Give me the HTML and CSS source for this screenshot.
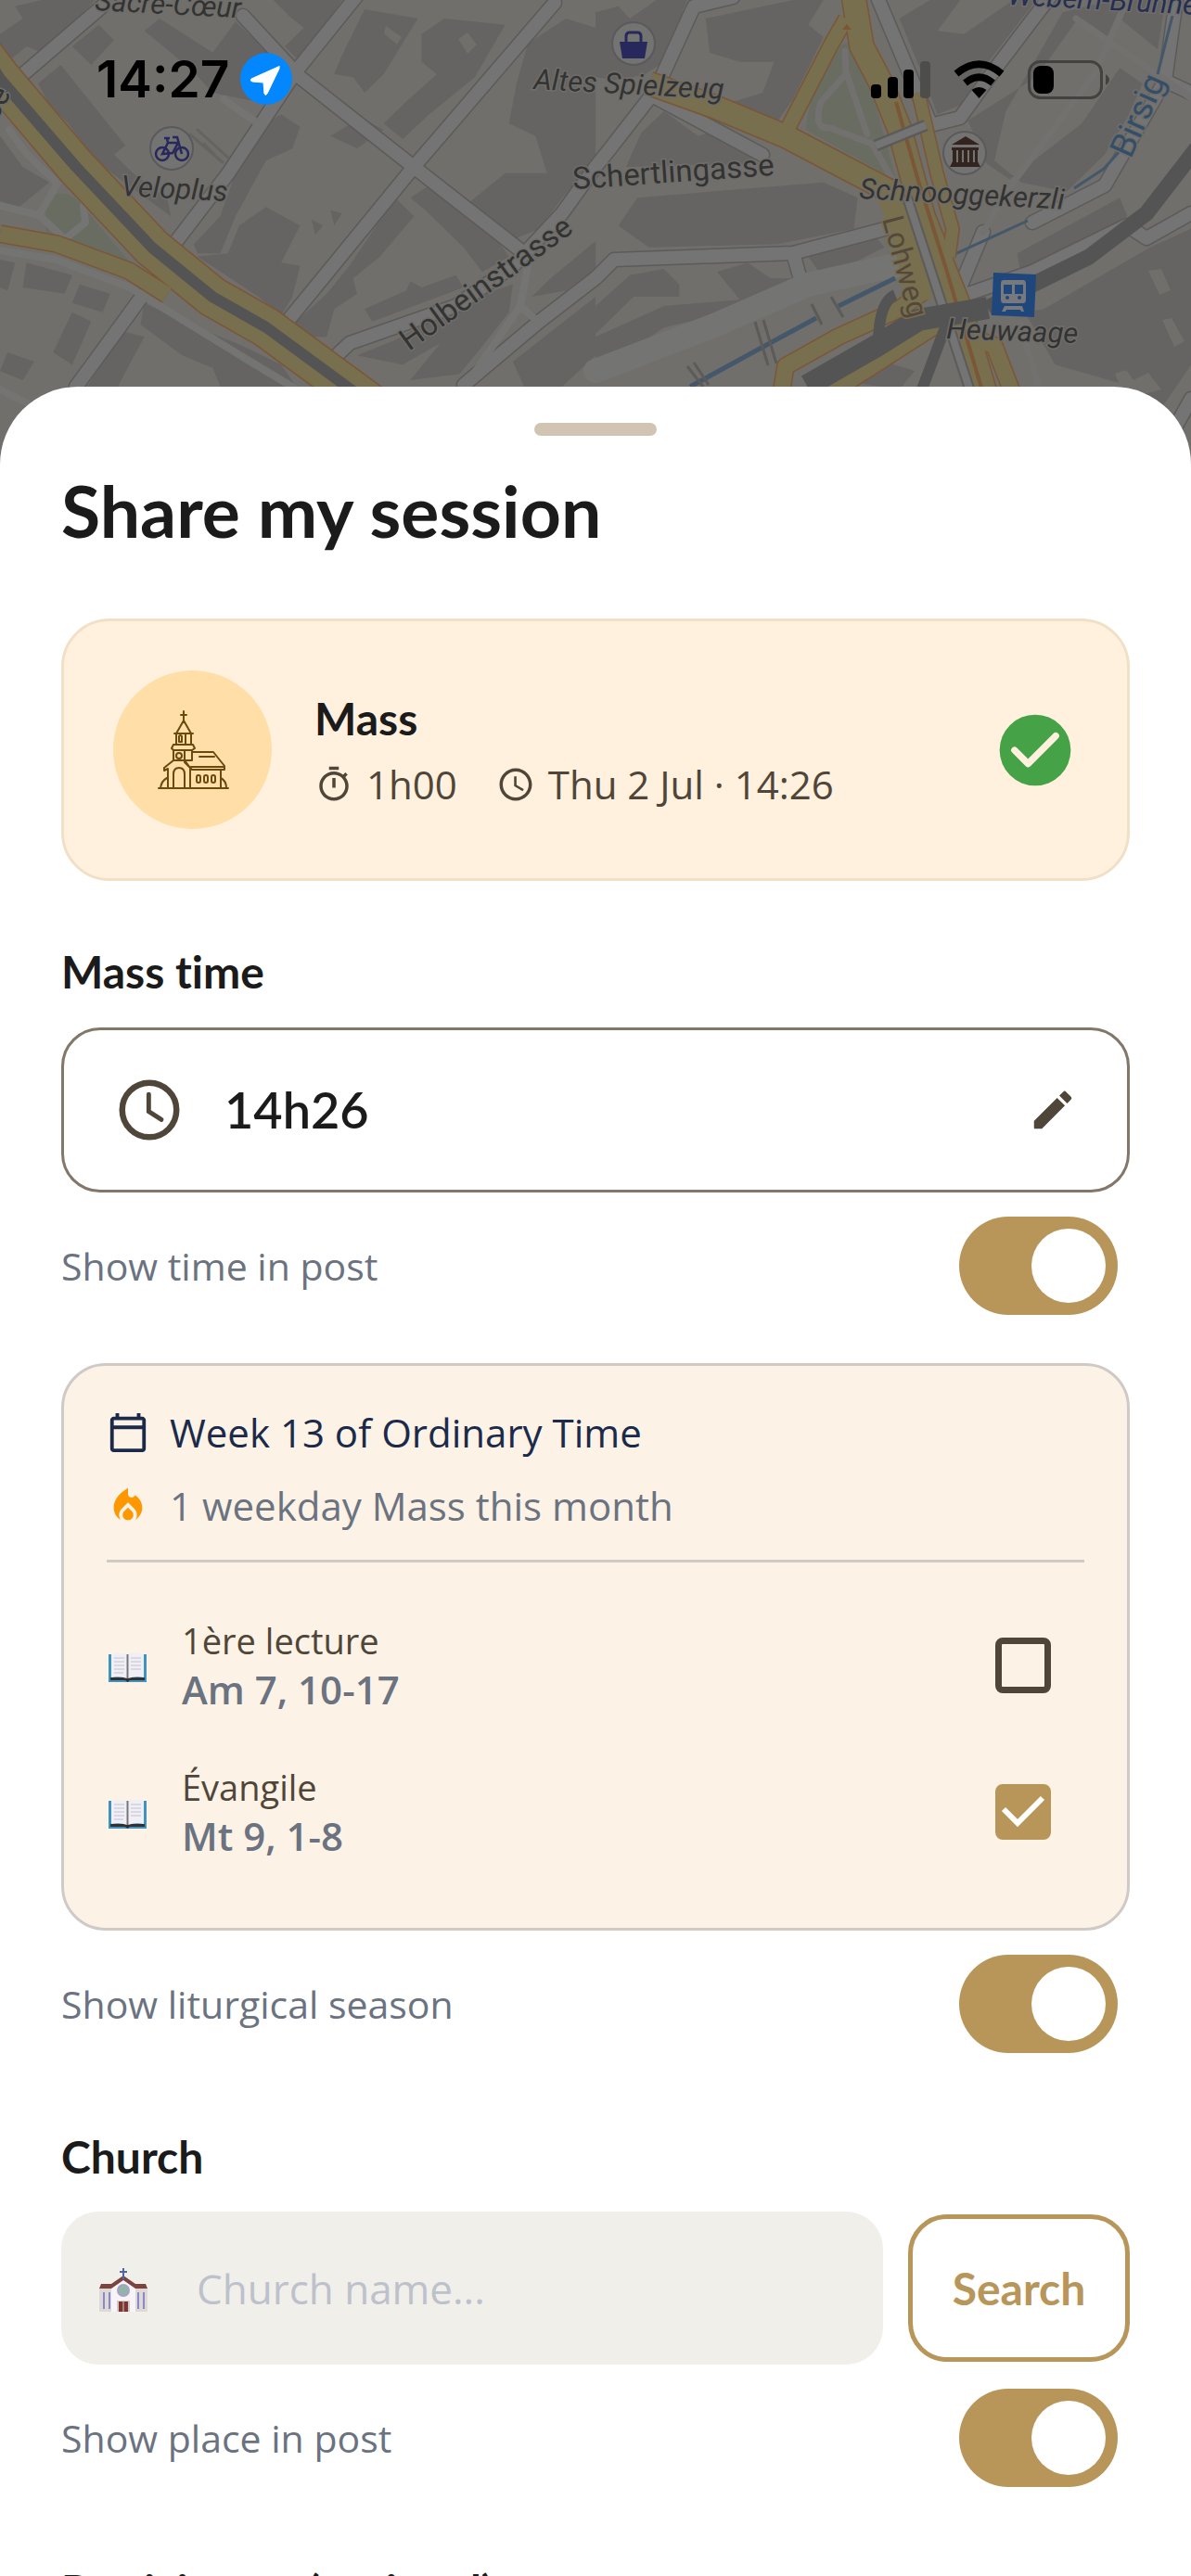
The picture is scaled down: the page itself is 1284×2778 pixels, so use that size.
FILE: index.html
```html
<!DOCTYPE html>
<html lang="en">
<head>
<meta charset="utf-8">
<meta name="viewport" content="width=device-width, initial-scale=1">
<title>Share my session</title>
<link rel="stylesheet" href="styles.css">
</head>
<body>
<div class="screen">
  <svg class="map" viewBox="0 0 1284 520" preserveAspectRatio="xMidYMin slice" aria-hidden="true">
    <defs>
      <path id="streets" d="M385-5L319 77L246 187L188 263M598 3L446 180L307 350M262 17L323 83L446 180L565 273M110 7L25 80M356 390L377 370L491 330L553 287L606 230L642 180L658 160L707 97L748 7L790-3M642 300L581 347L500 415M642 300L662 280L855 273L961 245M155 317L82 417M945-5L985 90L1003 133M1133-5L1076 70L1035 127L1003 135M703 103L822 167M1268 0L1256 87L1290 103M1256 87L1191 200L1113 240M1035 320L1113 293L1215 243L1236 257L1284 230M1060 250L1035 310M855 273L866 312M1284 430L1262 470"/>
      <g id="book"><path d="M2 3H43V33H2Z" fill="#3f93bd"/><path d="M4 28H41V31H25L22.500 33L20 31H4Z" fill="#34302f"/><path d="M5 3Q14 0 22 3V29Q14 26 5 28ZM40 3Q31 0 23 3V29Q31 26 40 28Z" fill="#f0eff5"/><path d="M8 7H19M8 11H19M8 15H19M8 19H19M8 23H18M26 7H37M26 11H37M26 15H37M26 19H37" stroke="#c3c0d0"/><path d="M22.500 3V29" stroke="#77747c" stroke-width="2"/></g>
    </defs>
    <rect width="1284" height="520" fill="#706f6b"/>
    <!-- Building blocks -->
    <g fill="#656462" transform="scale(.4095 .3333)">
      <path d="M40 20L110 0H250L180 90L110 170L70 150L20 200L0 180V110L60 60ZM190 150L260 80L300 130L240 210ZM100 270L160 210L330 470L300 500L350 560L440 640L450 700L250 520L180 400L130 340ZM380 100L420 60L560 170L620 70L690 150L740 240L680 330L560 300L500 220L480 200ZM720 0H900L850 100L790 200L750 150L800 90L760 50ZM960 30L1100 60L1010 240L960 300L930 250L880 240L900 180ZM1110 110L1170 60L1330 80L1250 250L1130 370L1060 450L1010 400L1060 340L1150 240L1110 200ZM700 400L740 370L790 410L770 480L700 520L620 700L580 820L520 820L510 790L580 700L620 560ZM700 670L790 730L740 850L790 860L770 960L740 1020L680 960L520 830L600 820L630 730ZM1130 600L1180 630L1300 760L1340 830L1270 880L1220 800L1120 680L1080 640ZM1040 640L1090 700L1000 830L930 900L940 950L880 1000L860 1090L780 1090L780 1040L860 950L920 860ZM960 1000L1070 940L1080 910L1110 930L1200 890L1220 930L980 1040ZM1390 140L1490 60L1568 90V520L1480 640L1420 740L1360 770L1230 660L1330 560L1440 560L1410 440L1340 400L1360 270Z"/>
      <path d="M0 440L60 540L130 590L50 670L0 650ZM0 840L40 850L20 940L0 930ZM70 850L190 890L170 950L60 930ZM210 920L290 950L270 1010L190 980ZM190 1010L240 1040L190 1180L140 1140ZM20 1140L90 1170L60 1230L0 1200ZM380 980L500 1050L640 1120L740 1180L780 1250H580L560 1190L480 1150L370 1050ZM320 1070L380 1090L310 1250H230ZM940 1150L1040 1100L1130 1040L1250 960L1350 920L1340 1010L1270 1120L1210 1210L1080 1230L1160 1110L1060 1180ZM1400 960L1490 940L1568 870V780L1450 900ZM1350 1170L1568 960V1150L1480 1250H1380ZM870 440L950 380L1010 420L940 480ZM820 710L850 730L830 760ZM870 680L900 690L880 730Z"/>
      <g transform="translate(1568 0)">
        <path d="M0 40L60 20L90 60L160 0H240L180 200L130 240L60 260L0 250ZM290 60L520 0H600L560 80L600 120L520 320L480 390L360 330L440 300L470 200L380 200L300 170ZM800 60L880 0H960L900 100L970 110L1100 0H1160L1040 190L960 340L900 370L860 240ZM1230 40L1360 0H1500L1480 160L1380 60L1340 130L1270 60L1160 250L980 390L1030 530L1090 580L1280 400L1380 220L1440 270L1400 380L1340 500L1240 620L1120 590L1050 520L1080 360ZM120 430L180 360L270 440L320 420L430 530L80 540ZM110 640L500 600L600 590L690 640L680 740L480 790L140 800L60 730ZM560 830L740 770L760 800L600 900ZM180 870L220 920L220 960L100 960L0 1080V990L90 890ZM320 880L400 850L460 900L520 900L560 920L420 990L180 1060L20 1190L0 1160V1090L180 990L380 970ZM1110 820L1380 640L1400 700L1150 860L1120 890ZM1180 1000L1460 800L1568 740V1180L1490 1320L1440 1310L1380 1240L1210 1180L1130 1010ZM640 1230L760 1170L840 1200L800 1260Z"/>
      </g>
    </g>
    <path d="M1238 292L1252 290L1262 313L1250 318ZM1253 345L1263 343L1277 368L1266 374ZM1202 403L1214 399L1222 410L1238 402L1252 420L1230 426L1208 418ZM494 42L504 35L514 48L504 58ZM416 28L433 40L428 48L414 36Z" fill="#706f6b"/>
    <!-- Parks -->
    <g fill="#686c61">
      <path d="M56 210Q76 205 89 222L139 282L120 278L95 265L50 250Q46 225 56 210Z"/>
      <path d="M908 48L925 45L965 190L955 188L869 140Q872 110 880 90Z"/>
    </g>
    <!-- Side streets -->
    <g fill="none" stroke-linejoin="round" stroke-linecap="round">
      <use href="#streets" stroke="#5c5b59" stroke-width="17"/>
      <use href="#streets" stroke="#747474" stroke-width="14"/>
      <path d="M642 400L765 353L871 307L970 285" stroke="#747472" stroke-width="26"/>
      <path d="M569 287L561 330L508 407M561 330L580 347M241 107L278 133M0 222L42 232L62 198L28 165L10 140M42 232L70 258L92 240L90 222M0 270L60 280L140 310L270 390L320 420M0 420L80 460" stroke="#747472" stroke-width="8"/>
      <path d="M1160 20L1290 110M1215 0L1180 80L1090 200L1060 250M911 55L912 80L885 110Q876 140 895 138L940 155L960 190M913 80L935 145M1100 350L1120 417" stroke="#72716f" stroke-width="7"/>
      <path d="M205 145L240 175M213 140L246 170M220 155L236 172" stroke="#656462" stroke-width="3"/>
    </g>
    <!-- Stream -->
    <path d="M1264 17L1248 80M1207 163L1190 182L1158 203M1108 238L1023 277" fill="none" stroke="#44576b" stroke-width="3"/>
    <path d="M965 300L904 330M880 343L830 370L744 417" fill="none" stroke="#44576b" stroke-width="5"/>
    <path d="M896 320L909 342M875 328L886 350M814 347L828 394M823 345L837 392M741 395L758 417M748 391L764 415" fill="none" stroke="#5c5b59" stroke-width="3"/>
    <!-- Main roads -->
    <g fill="none" stroke-linejoin="round">
      <g stroke="#7b5637">
        <path d="M-20 57L0 83L82 180L164 267L229 320L287 353L400 436" stroke-width="45"/>
        <path d="M0 252L61 263L139 292L180 318" stroke-width="20"/>
        <path d="M920-5L929 50L950 90L970 140L995 233L1035 333L1064 430" stroke-width="28"/>
        <path d="M912 20L895 50L847 143" stroke-width="18"/>
        <path d="M700 90L770 115L847 147L961 207" stroke-width="27"/>
        <path d="M990 100L1010 187L1027 247L1023 277" stroke-width="16"/>
        <path d="M842 425L847 395L904 363L970 333L995 315M896 423L1010 350L1072 373L1092 425" stroke-width="20"/>
      </g>
      <g stroke="#776f4d">
        <path d="M-20 57L0 83L82 180L164 267L229 320L287 353L400 436" stroke-width="42"/>
        <path d="M0 252L61 263L139 292L180 318" stroke-width="17"/>
        <path d="M920-5L929 50L950 90L970 140L995 233L1035 333L1064 430" stroke-width="25"/>
        <path d="M912 20L895 50L847 143" stroke-width="15"/>
        <path d="M700 90L770 115L847 147L961 207" stroke-width="24"/>
        <path d="M955 200L975 250L992 325" stroke-width="28"/>
        <path d="M990 100L1010 187L1027 247L1023 277" stroke-width="13"/>
        <path d="M842 425L847 395L904 363L970 333L995 315M896 423L1010 350L1072 373L1092 425" stroke-width="17"/>
      </g>
      <path d="M966 110L990 195L1020 290L1060 425" stroke="#7b5637" stroke-width="4"/>
      <path d="M978 213L1047 425" stroke="#5c5b59" stroke-width="12"/>
      <path d="M978 213L1047 425" stroke="#747474" stroke-width="8"/>
      <path d="M944 157L998 135" stroke="#5c5b59" stroke-width="13"/>
      <path d="M944 157L998 135" stroke="#747474" stroke-width="8"/>
      <path d="M908 32L913 26L918 32Z" fill="#7b5637"/>
    </g>
    <!-- Tram lines -->
    <g fill="none" stroke="#545454" stroke-linejoin="round">
      <path d="M-20 53L0 85L82 180L164 267L229 320L287 353L400 436" stroke-width="12"/>
      <path d="M1290 160L1236 230L1174 277L1113 307L1065 332" stroke-width="17"/>
      <path d="M1065 332L990 345L945 373L870 416" stroke-width="24"/>
      <path d="M965 318Q948 325 947 368M1022 345L992 425" stroke-width="12"/>
    </g>
    <!-- Places -->
    <g fill="#737371" stroke="#5a5a5e" stroke-width="2">
      <circle cx="185" cy="160" r="23"/><circle cx="683" cy="47" r="23"/><circle cx="1040" cy="165" r="23"/>
    </g>
    <g fill="none" stroke="#28285c" stroke-width="2.5">
      <circle cx="175" cy="166" r="7"/><circle cx="196" cy="166" r="7"/>
      <path d="M175 166L181 154H192L186 165ZM177 149H183M181 154L180 149M196 166L191 148H186"/>
    </g>
    <path d="M668 45H698L695 63H671Z" fill="#28285c"/>
    <path d="M675 46V39Q675 35 679 35H687Q691 35 691 39V46" fill="none" stroke="#28285c" stroke-width="3"/>
    <path d="M1026 156L1041 147L1056 156ZM1026 159H1055V162H1054V174L1057 180H1024L1027 174V162H1026ZM1031 162V175H1033V162ZM1037 162V175H1039V162ZM1043 162V175H1045V162ZM1049 162V175H1051V162Z" fill="#33241f" fill-rule="evenodd"/>
    <path d="M1071 294L1117 296L1115 342L1069 340Z" fill="#20477c"/>
    <path d="M1082 302H1103Q1106 302 1106 306V323Q1106 327 1103 327H1082Q1079 327 1079 323V306Q1079 302 1082 302ZM1082 307V317H1091V307ZM1094 307V317H1103V307ZM1084 321A2 2 0 1 0 1088 321A2 2 0 1 0 1084 321ZM1097 321A2 2 0 1 0 1101 321A2 2 0 1 0 1097 321ZM1083 330H1102L1104 336H1101L1100 334H1085L1084 336H1080Z" fill="#77797c" fill-rule="evenodd"/>
    <g class="map-names">
      <text x="102" y="11" transform="rotate(3 102 11)">Sacré-Cœur</text>
      <text x="130" y="211" transform="rotate(3 130 211)">Veloplus</text>
      <text x="575" y="96" transform="rotate(3 575 96)">Altes Spielzeug</text>
      <text x="926" y="214" transform="rotate(3 926 214)">Schnooggekerzli</text>
      <text x="1020" y="365" transform="rotate(2 1020 365)">Heuwaage</text>
      <text class="quarter" x="1086" y="5" transform="rotate(3 1086 5)">Webern-Brunnen</text>
      <text class="water" x="1219" y="172" transform="rotate(-66 1219 172)">Birsig</text>
      <text class="street" x="618" y="204" transform="rotate(-4 618 204)">Schertlingasse</text>
      <text class="street" x="441" y="379" transform="rotate(-36 441 379)">Holbeinstrasse</text>
      <text class="street" x="-12" y="146" transform="rotate(-62 -12 146)">sse</text>
      <text class="road" x="951" y="236" transform="rotate(75 951 236)">Lohweg</text>
    </g>
  </svg>

  <header class="status-bar">
    <div class="status-left">
      <time class="status-time">14:27</time>
      <svg width="57" height="57" viewBox="0 0 57 57" role="img" aria-label="Location in use"><circle cx="28" cy="28" r="28" fill="#0387fe"/><path d="M42 15Q43 14 41 15L12 28Q10 30 13 31L25 32L26 44Q27 47 29 44L42 17Z" fill="#fff" stroke="#fff" stroke-width="1"/></svg>
    </div>
    <div class="status-right">
      <svg width="64" height="42" viewBox="0 0 64 42" role="img" aria-label="Signal"><rect x="0" y="26" width="11" height="15" rx="4"/><rect x="18" y="18" width="11" height="23" rx="4"/><rect x="35" y="10" width="11" height="31" rx="4"/><rect x="53" y="1" width="11" height="40" rx="4" fill="#4d4d4c"/></svg>
      <svg width="55" height="42" viewBox="0 0 55 42" role="img" aria-label="Wi-Fi"><path d="M27.500 41L19.500 32Q27.500 26 35.500 32Z"/><path d="M12.500 24.500Q27.500 12 42.500 24.500M3 14.500Q27.500-6 52 14.500" fill="none" stroke="#000" stroke-width="7.500"/></svg>
      <svg width="89" height="42" viewBox="0 0 89 42" role="img" aria-label="Battery"><rect x="1.500" y="1.500" width="78" height="39" rx="12" fill="none" stroke="#424241" stroke-width="3"/><rect x="6" y="6" width="22" height="30" rx="8"/><path d="M84 15Q92 21 84 27Z" fill="#424241"/></svg>
    </div>
  </header>

  <main class="sheet">
    <div class="handle"></div>
    <h1 class="title">Share my session</h1>

    <section class="session">
      <div class="session-mark">
        <svg width="78" height="86" viewBox="0 0 78 86" fill="none" stroke="#6b4a0d" stroke-width="2" stroke-linejoin="round" stroke-linecap="round" aria-hidden="true">
          <path d="M29 1V11M26 5H32M29 11L21 25H37L29 11M19 25H39M21 25V36M37 25V36M31 25V36M24 28Q26 26 27 28V34H24ZM18 37H39L41 41L38 43H18L16 41ZM18 43V54M30 43V55M38 43V54H30"/>
          <circle cx="24" cy="49" r="3"/>
          <path d="M18 54L8 62V65L12 63V84M30 54L36 62V84M18 54H30M18 84V69Q18 62 24 62Q30 62 30 69V84M38 45H61L73 60V64H38L30 56M37 61H72M46 50H62M69 64V84M2 84H77M4 84Q5 76 11 73M75 84Q75 76 69 73"/>
          <rect x="43" y="70" width="4" height="8" rx="2"/><rect x="51" y="70" width="4" height="8" rx="2"/><rect x="59" y="70" width="4" height="8" rx="2"/>
        </svg>
      </div>
      <div class="session-info">
        <h2 class="label">Mass</h2>
        <div class="meta">
          <span class="meta-item">
            <svg width="42" height="42" viewBox="0 0 24 24" fill="currentColor" aria-hidden="true"><path d="M15 1H9v2h6V1zm-4 13h2V8h-2v6zm8.030-6.610l1.420-1.420c-.43-.51-.9-.99-1.410-1.410l-1.420 1.420C16.070 4.740 14.120 4 12 4c-4.970 0-9 4.030-9 9s4.020 9 9 9 9-4.030 9-9c0-2.120-.74-4.070-1.970-5.610zM12 20c-3.870 0-7-3.130-7-7s3.130-7 7-7 7 3.130 7 7-3.130 7-7 7z"/></svg>
            <span>1h00</span>
          </span>
          <span class="meta-item">
            <svg width="42" height="42" viewBox="0 0 24 24" fill="currentColor" aria-hidden="true"><path d="M11.990 2C6.470 2 2 6.480 2 12s4.470 10 9.990 10C17.520 22 22 17.520 22 12S17.520 2 11.990 2zM12 20c-4.420 0-8-3.580-8-8s3.580-8 8-8 8 3.580 8 8-3.580 8-8 8zm.5-13H11v6l5.250 3.150.75-1.230-4.500-2.670z"/></svg>
            <span>Thu 2 Jul · 14:26</span>
          </span>
        </div>
      </div>
      <svg width="92" height="92" viewBox="0 0 24 24" role="img" aria-label="Completed"><circle cx="12" cy="12" r="10" fill="#45a247"/><path d="M6.200 12L10 15.800L17.800 8" fill="none" stroke="#fff1de" stroke-width="1.900" stroke-linecap="round" stroke-linejoin="round"/></svg>
    </section>

    <section class="group">
      <label class="label" for="mass-time">Mass time</label>
      <div class="time-field">
        <svg width="78" height="78" viewBox="0 0 24 24" fill="none" stroke="currentColor" stroke-width="2" aria-hidden="true"><circle cx="12" cy="12" r="9"/><path d="M11.800 6.800V12.500L16 15.200" stroke-width="1.500" stroke-linecap="round"/></svg>
        <input class="time-input" id="mass-time" type="text" value="14h26">
        <svg width="54" height="54" viewBox="0 0 24 24" fill="currentColor" aria-hidden="true"><path d="M3 17.460v3.040c0 .28.22.5.5.5h3.040c.13 0 .26-.05.35-.15L17.810 9.940l-3.750-3.750L3.150 17.100c-.1.1-.15.22-.15.36zM20.710 7.040a1 1 0 0 0 0-1.410l-2.340-2.340a1 1 0 0 0-1.410 0l-1.830 1.830 3.750 3.750 1.830-1.830z"/></svg>
      </div>
      <div class="switch-row">
        <label for="show-time">Show time in post</label>
        <input class="switch" id="show-time" type="checkbox" role="switch" checked>
      </div>
    </section>

    <section class="season">
      <div class="season-line week">
        <svg width="46" height="46" viewBox="0 0 24 24" fill="currentColor" aria-hidden="true"><path d="M20 3h-1V1h-2v2H7V1H5v2H4c-1.100 0-2 .9-2 2v16c0 1.100.9 2 2 2h16c1.100 0 2-.9 2-2V5c0-1.100-.9-2-2-2zm0 18H4V10h16v11zm0-13H4V5h16v3z"/></svg>
        <span>Week 13 of Ordinary Time</span>
      </div>
      <div class="season-line">
        <svg width="46" height="46" viewBox="0 0 24 24" fill="#ff9800" aria-hidden="true"><path d="M12 12.900l-2.130 2.090C9.310 15.550 9 16.280 9 17.060 9 18.680 10.350 20 12 20s3-1.320 3-2.940c0-.78-.31-1.520-.87-2.070L12 12.900z"/><path d="M16 6l-.44.55C14.380 8.020 12 7.190 12 5.300V2S4 6 4 13c0 2.920 1.560 5.470 3.890 6.860C7.330 19.070 7 18.100 7 17.060c0-1.320.52-2.560 1.470-3.500L12 10.100l3.530 3.470c.95.93 1.470 2.170 1.470 3.500 0 1.020-.31 1.960-.85 2.750 1.890-1.150 3.290-3.060 3.710-5.300C20.520 10.970 18.790 7.620 16 6z"/></svg>
        <span>1 weekday Mass this month</span>
      </div>
      <ul class="readings">
        <li class="reading">
          <svg width="46" height="38" viewBox="0 -4 46 38" aria-hidden="true"><use href="#book"/></svg>
          <label class="reading-text" for="reading-1"><span class="reading-name">1ère lecture</span><span class="reading-ref">Am 7, 10-17</span></label>
          <input class="tick" id="reading-1" type="checkbox">
        </li>
        <li class="reading">
          <svg width="46" height="38" viewBox="0 -4 46 38" aria-hidden="true"><use href="#book"/></svg>
          <label class="reading-text" for="reading-2"><span class="reading-name">Évangile</span><span class="reading-ref">Mt 9, 1-8</span></label>
          <span class="tick-wrap"><input class="tick" id="reading-2" type="checkbox" checked><svg class="tick-mark" width="60" height="60" viewBox="0 0 60 60" fill="none" stroke="#fff" stroke-width="6" aria-hidden="true"><path d="M9 27L24 42L51 15"/></svg></span>
        </li>
      </ul>
    </section>
    <div class="switch-row">
      <label for="show-season">Show liturgical season</label>
      <input class="switch" id="show-season" type="checkbox" role="switch" checked>
    </div>

    <section class="group church">
      <label class="label" for="church-name">Church</label>
      <div class="search-row">
        <div class="church-field">
          <svg width="54" height="54" viewBox="0 -4 54 54" aria-hidden="true"><path d="M1 22H53V48H1Z" fill="#dfd9d6"/><path d="M14 22L27 12L40 22V48H14Z" fill="#f6f4f6"/><path d="M3 18H14L27 9L40 18H51L53 23H40L27 14L14 23H1Z" fill="#7c4340"/><path d="M27 1V13M23 5H31" stroke="#5263a8" stroke-width="2"/><circle cx="27" cy="25" r="6" fill="#92b5a9" stroke="#aaa0c4" stroke-width="2"/><path d="M20 36H34V48H20Z" fill="#d6cac6"/><path d="M22 37H26.500V48H22ZM27.500 37H32V48H27.500Z" fill="#7d3432"/><path d="M6 27V45M12 27V45M43 27V45M49 27V45" stroke="#8988ce" stroke-width="2"/></svg>
          <input class="church-input" id="church-name" type="text" placeholder="Church name...">
        </div>
        <button class="search-button" type="button">Search</button>
      </div>
      <div class="switch-row">
        <label for="show-place">Show place in post</label>
        <input class="switch" id="show-place" type="checkbox" role="switch" checked>
      </div>
    </section>

    <section class="group participants">
      <h2 class="label">Participants (optional)</h2>
    </section>
  </main>
</div>
</body>
</html>
```
FILE: styles.css
```css
:root {
  --gold: #b89659;
  --ink: #1b1b1b;
  --brown: #4f4639;
  --slate: #6b7280;
  --body: "Open Sans", "Noto Sans", sans-serif;
  --strong: Lato, "Open Sans", sans-serif;
}

* { box-sizing: border-box; }

body {
  margin: 0;
  background: #fff;
  color: var(--ink);
  font: 42px/54px var(--body);
}

svg { display: block; flex: none; }
h1, h2 { margin: 0; }
input, button { font: inherit; color: inherit; margin: 0; }

.screen {
  position: relative;
  display: flex;
  flex-direction: column;
  height: 100vh;
  overflow: hidden;
}

/* Dimmed map behind the sheet */
.map {
  position: absolute;
  top: 0;
  left: 0;
  width: 100%;
  height: 520px;
}

.map-names {
  font: italic 31px Roboto, sans-serif;
  fill: #333332;
  stroke: #6f6e6b;
  stroke-width: 3px;
  paint-order: stroke;
}
.map-names .street { font-style: normal; font-size: 33px; }
.map-names .road { font-style: normal; font-size: 32px; fill: #54473b; stroke: #776f4d; }
.map-names .water { font-style: normal; font-size: 37px; fill: #354e68; }
.map-names .quarter { fill: #262f52; }

.status-bar {
  position: relative;
  flex: none;
  display: flex;
  justify-content: space-between;
  align-items: flex-start;
  height: 417px;
  padding: 57px 87px 0 104px;
}
.status-left, .status-right { display: flex; align-items: center; height: 57px; }
.status-left { gap: 12px; }
.status-right { gap: 25px; }
.status-time { font: 600 55px/57px Inter, sans-serif; color: #000; }

/* Sheet */
.sheet {
  position: relative;
  flex: 1;
  min-height: 0;
  overflow: hidden;
  padding: 39px 66px 0;
  background: #fff;
  border-radius: 84px 84px 0 0;
}
.handle {
  width: 132px;
  height: 14px;
  margin: 0 auto 34px;
  border-radius: 7px;
  background: #d1c4b2;
}
.title {
  margin-bottom: 71px;
  font: 700 77px/92px var(--strong);
}
.label {
  display: block;
  font: 700 48px/60px var(--strong);
  font-variant-ligatures: none;
}

.session {
  display: flex;
  align-items: center;
  gap: 46px;
  padding: 53px;
  border: 3px solid #f1e0c6;
  border-radius: 52px;
  background: #fff1de;
}
.session-mark {
  display: flex;
  flex: none;
  align-items: center;
  justify-content: center;
  width: 171px;
  height: 171px;
  border-radius: 50%;
  background: #ffdea8;
}
.session-info { flex: 1; }
.meta {
  display: flex;
  gap: 42px;
  margin-top: 14px;
  color: var(--brown);
}
.meta-item { display: flex; align-items: center; gap: 14px; }

.group { margin-top: 68px; }

.time-field {
  display: flex;
  align-items: center;
  gap: 42px;
  height: 178px;
  margin-top: 30px;
  padding: 0 53px;
  border: 3px solid #827768;
  border-radius: 42px;
  color: var(--brown);
}
.time-input {
  flex: 1;
  min-width: 0;
  padding: 0;
  border: 0;
  background: none;
  color: var(--ink);
  font: 600 54px/72px var(--strong);
}

.switch-row {
  display: flex;
  align-items: center;
  justify-content: space-between;
  margin-top: 26px;
  padding-right: 13px;
  color: var(--slate);
  font-size: 41px;
}
.switch {
  appearance: none;
  display: flex;
  justify-content: flex-end;
  width: 171px;
  height: 106px;
  padding: 13px;
  border-radius: 53px;
  background: var(--gold);
}
.switch::before {
  content: "";
  width: 80px;
  height: 80px;
  border-radius: 50%;
  background: #fff;
}
.switch:not(:checked) { justify-content: flex-start; background: #cfcac5; }

/* Liturgical season */
.season {
  margin-top: 52px;
  padding: 45px 46px 46px;
  border: 3px solid #cfcac5;
  border-radius: 48px;
  background: #fcf3e6;
}
.season-line {
  display: flex;
  align-items: center;
  gap: 22px;
  margin-bottom: 25px;
  color: var(--slate);
}
.week { color: #1b2a4a; font-weight: 500; }
.readings {
  margin: 31px 0 0;
  padding: 32px 0 0;
  border-top: 3px solid #cfcac5;
  list-style: none;
}
.reading {
  display: flex;
  align-items: center;
  gap: 35px;
  height: 158px;
  padding-right: 36px;
}
.reading-text { display: flex; flex: 1; flex-direction: column; }
.reading-name { font-size: 38px; line-height: 52px; color: var(--brown); }
.reading-ref { font-weight: 600; color: var(--slate); }
.tick {
  appearance: none;
  display: block;
  width: 60px;
  height: 60px;
  border: 7px solid var(--brown);
  border-radius: 8px;
}
.tick:checked { border-color: var(--gold); background: var(--gold); }
.tick-wrap { position: relative; }
.tick-mark { position: absolute; inset: 0; pointer-events: none; }

/* Church */
.church { margin-top: 82px; }
.search-row {
  display: flex;
  align-items: center;
  gap: 27px;
  margin-top: 29px;
}
.church-field {
  display: flex;
  flex: 1;
  align-items: center;
  gap: 52px;
  height: 165px;
  padding: 0 40px;
  border-radius: 40px;
  background: #f0efea;
}
.church-input {
  flex: 1;
  min-width: 0;
  padding: 0;
  border: 0;
  background: none;
  font-size: 44px;
  line-height: 60px;
}
.church-input::placeholder { color: #bdc1cb; opacity: 1; }
.search-button {
  width: 239px;
  height: 159px;
  padding: 0;
  border: 5px solid var(--gold);
  border-radius: 42px;
  background: #fff;
  color: var(--gold);
  font: 700 48px/60px var(--strong);
}
.participants { margin-top: 82px; }
```
